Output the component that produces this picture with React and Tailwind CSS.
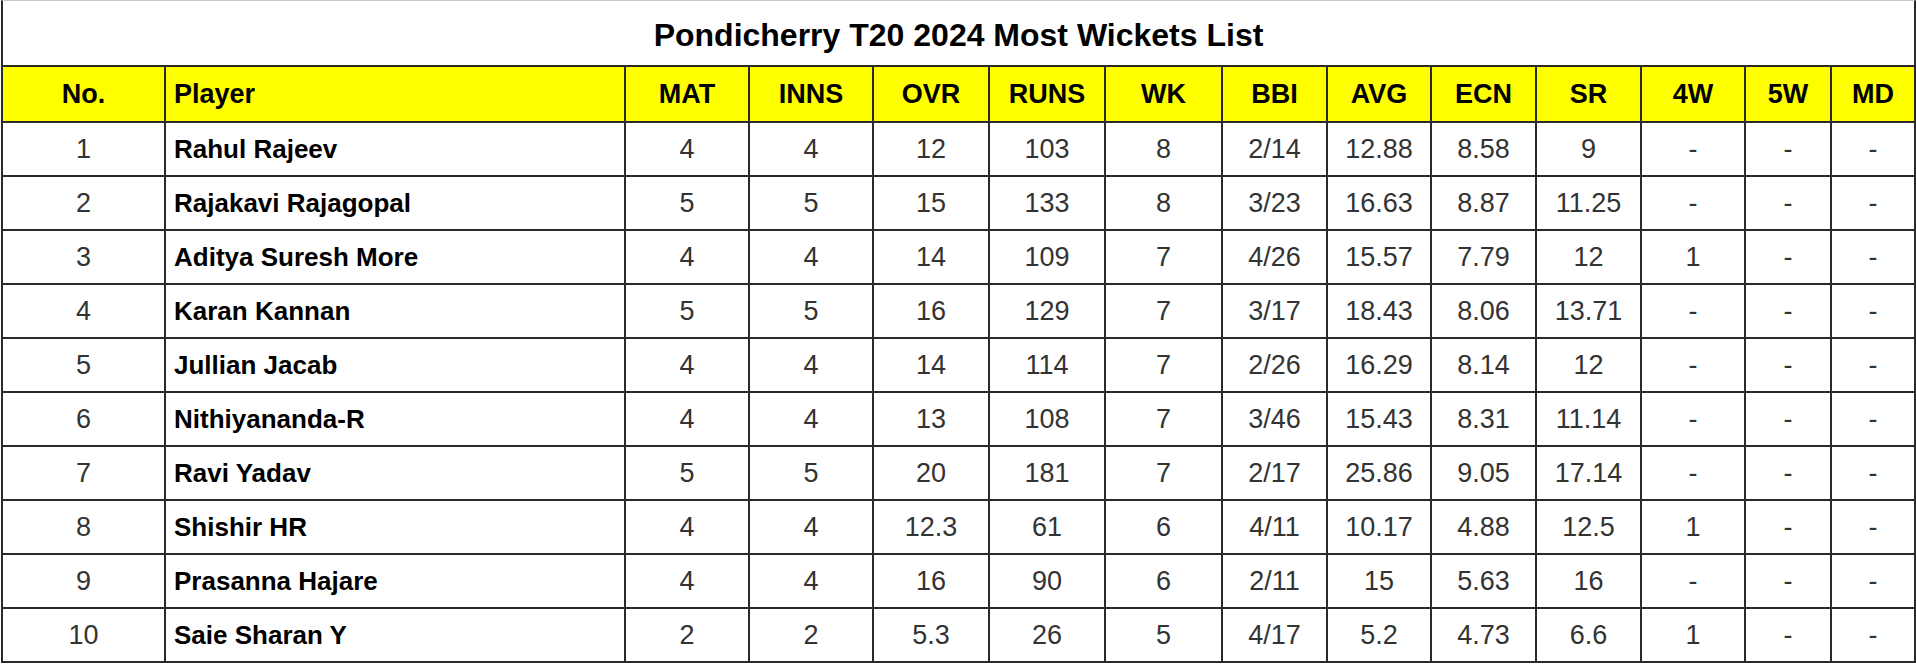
import React from "react";

const cols =
  "grid grid-cols-[165px_460px_124px_124px_116px_116px_117px_105px_104px_105px_105px_104px_86px_84px]";

const headers = ["No.", "Player", "MAT", "INNS", "OVR", "RUNS", "WK", "BBI", "AVG", "ECN", "SR", "4W", "5W", "MD"];

const rows = [
  ["1", "Rahul Rajeev", "4", "4", "12", "103", "8", "2/14", "12.88", "8.58", "9", "-", "-", "-"],
  ["2", "Rajakavi Rajagopal", "5", "5", "15", "133", "8", "3/23", "16.63", "8.87", "11.25", "-", "-", "-"],
  ["3", "Aditya Suresh More", "4", "4", "14", "109", "7", "4/26", "15.57", "7.79", "12", "1", "-", "-"],
  ["4", "Karan Kannan", "5", "5", "16", "129", "7", "3/17", "18.43", "8.06", "13.71", "-", "-", "-"],
  ["5", "Jullian Jacab", "4", "4", "14", "114", "7", "2/26", "16.29", "8.14", "12", "-", "-", "-"],
  ["6", "Nithiyananda-R", "4", "4", "13", "108", "7", "3/46", "15.43", "8.31", "11.14", "-", "-", "-"],
  ["7", "Ravi Yadav", "5", "5", "20", "181", "7", "2/17", "25.86", "9.05", "17.14", "-", "-", "-"],
  ["8", "Shishir HR", "4", "4", "12.3", "61", "6", "4/11", "10.17", "4.88", "12.5", "1", "-", "-"],
  ["9", "Prasanna Hajare", "4", "4", "16", "90", "6", "2/11", "15", "5.63", "16", "-", "-", "-"],
  ["10", "Saie Sharan Y", "2", "2", "5.3", "26", "5", "4/17", "5.2", "4.73", "6.6", "1", "-", "-"],
];

function Cell({ i, children, header }) {
  const base = "flex items-center border-r-2 border-[#2a2a2a]";
  const first = i === 0 ? " border-l-2" : "";
  const align = i === 1 ? " justify-start pl-[8px]" : " justify-center";
  const weight = header
    ? " font-bold text-black text-[27px]"
    : i === 1
    ? " font-bold text-black text-[26px]"
    : " font-normal text-[#333] text-[27px]";
  return <div className={base + first + align + weight}>{children}</div>;
}

export default function App() {
  return (
    <div
      className="w-[1916px] h-[664px] overflow-hidden bg-white pl-[1px]"
      style={{ fontFamily: '"Liberation Sans", Arial, sans-serif' }}
    >
      <div className="h-[67px] pt-[4px] border-t border-t-[#c8c8c8] border-l-2 border-r-2 border-b-2 border-l-[#2a2a2a] border-r-[#2a2a2a] border-b-[#2a2a2a] flex items-center justify-center">
        <span className="text-[32px] font-bold text-black leading-none">
          Pondicherry T20 2024 Most Wickets List
        </span>
      </div>
      <div className={cols + " h-[56px] bg-[#ffff00] border-b-2 border-[#2a2a2a]"}>
        {headers.map((h, i) => (
          <Cell key={i} i={i} header>
            {h}
          </Cell>
        ))}
      </div>
      {rows.map((r, ri) => (
        <div key={ri} className={cols + " h-[54px] bg-white border-b-2 border-[#2a2a2a]"}>
          {r.map((v, i) => (
            <Cell key={i} i={i}>
              {v}
            </Cell>
          ))}
        </div>
      ))}
    </div>
  );
}
